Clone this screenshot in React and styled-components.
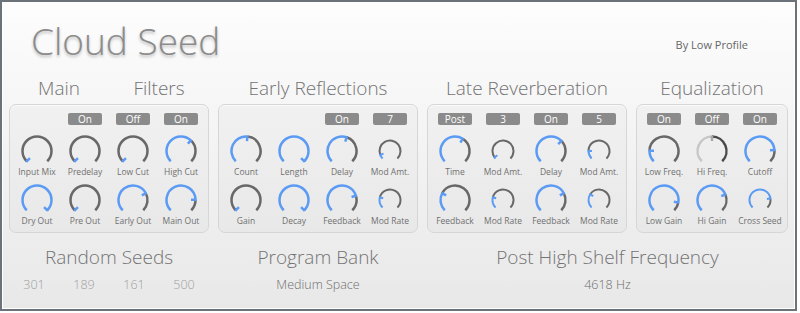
import React from "react";
import styled, { createGlobalStyle } from "styled-components";

const GlobalStyle = createGlobalStyle`
  html, body {
    margin: 0;
    padding: 0;
    background: #ffffff;
  }
  body {
    font-family: "Open Sans", "Liberation Sans", sans-serif;
  }
`;

// рамка окна плагина
const Frame = styled.div`
  width: 797px;
  height: 311px;
  box-sizing: border-box;
  border: 2px solid #6c7279;
  box-shadow: inset 0 0 0 1px #ffffff;
  background: linear-gradient(#fdfdfd, #e8e8e8);
  display: flex;
  flex-direction: column;
  padding-left: 7px;
  overflow: hidden;
`;

const Header = styled.div`
  display: flex;
  justify-content: space-between;
  align-items: flex-start;
  height: 74px;
  box-sizing: border-box;
  padding: 17px 47px 0 22px;
`;

const Title = styled.div`
  font-size: 37px;
  font-weight: 300;
  line-height: 44px;
  color: #8b8b8b;
  text-shadow: 0 2px 3px rgba(0, 0, 0, 0.25);
`;

const Byline = styled.div`
  margin-top: 19px;
  font-size: 11px;
  line-height: 14px;
  color: #666;
`;

const Sections = styled.div`
  display: flex;
  gap: 9px;
  align-items: flex-start;
`;

const Section = styled.div`
  display: flex;
  flex-direction: column;
`;

const HeadingRow = styled.div`
  display: flex;
  height: 24px;
  margin-bottom: 4px;
`;

const Heading = styled.div`
  flex: 1;
  text-align: center;
  font-size: 19px;
  font-weight: 300;
  line-height: 24px;
  color: #737373;
  white-space: nowrap;
`;

const Panel = styled.div`
  border: 1px solid #d6d6d6;
  border-radius: 7px;
  padding: 8px 3px 5px;
  background: rgba(0, 0, 0, 0.018);
  box-shadow: inset 0 1px 0 rgba(255, 255, 255, 0.7);
`;

const ButtonRow = styled.div`
  display: grid;
  grid-template-columns: repeat(${p => p.cols}, 48px);
  height: 12px;
  margin-bottom: 10px;
`;

const Toggle = styled.div`
  width: 34px;
  height: 12px;
  margin: 0 auto;
  border-radius: 2px;
  background: #8b8b8b;
  color: #fff;
  font-size: 10px;
  line-height: 12px;
  text-align: center;
`;

const KnobGrid = styled.div`
  display: grid;
  grid-template-columns: repeat(${p => p.cols}, 48px);
  row-gap: 6px;
`;

const Cell = styled.div`
  display: flex;
  flex-direction: column;
  align-items: center;
`;

const KnobSvg = styled.svg`
  display: block;
  width: 34px;
  height: 30px;
`;

const KnobLabel = styled.div`
  margin-top: 1px;
  font-size: 8.5px;
  line-height: 12px;
  color: #707070;
  white-space: nowrap;
`;

const Bottom = styled.div`
  display: flex;
  gap: 9px;
  margin-top: 11px;
`;

const Block = styled.div`
  width: ${p => p.w}px;
  display: flex;
  flex-direction: column;
  align-items: center;
`;

const BigLabel = styled.div`
  font-size: 19px;
  font-weight: 300;
  line-height: 26px;
  color: #737373;
  white-space: nowrap;
`;

const Seeds = styled.div`
  display: grid;
  grid-template-columns: repeat(4, 50px);
  margin-top: 7px;
`;

const Value = styled.div`
  margin-top: ${p => (p.inGrid ? 0 : 7)}px;
  text-align: center;
  font-size: 12.5px;
  font-weight: 300;
  line-height: 16px;
  color: ${p => (p.faint ? "#a0a0a0" : "#6e6e6e")};
`;

const BLUE = "#5b9bf4";
const GRAY = "#686868";

const polar = (cx, cy, r, deg) => {
  const a = (deg * Math.PI) / 180;
  return [cx + r * Math.sin(a), cy - r * Math.cos(a)];
};

const arc = (cx, cy, r, a0, a1) => {
  const [x0, y0] = polar(cx, cy, r, a0);
  const [x1, y1] = polar(cx, cy, r, a1);
  const large = a1 - a0 > 180 ? 1 : 0;
  return `M${x0} ${y0} A${r} ${r} 0 ${large} 1 ${x1} ${y1}`;
};

// крутилка: дуга 270°, синий кусок до значения и метка
const Knob = ({ value, small, off }) => {
  const cx = 17;
  const cy = 16;
  const r = small ? 10.5 : 14.5;
  const sw = small ? 2 : 2.5;
  const ang = -135 + value * 270;
  const fill = off ? "#c6c6c6" : BLUE;
  const rest = off ? "#4a4a4a" : GRAY;
  const tick = off ? "#a8a8a8" : BLUE;
  const [tx0, ty0] = polar(cx, cy, r - (small ? 3.5 : 4.5), ang);
  const [tx1, ty1] = polar(cx, cy, r + 0.8, ang);
  return (
    <KnobSvg viewBox="0 0 34 30">
      {value < 1 && (
        <path d={arc(cx, cy, r, ang, 135)} fill="none" stroke={rest} strokeWidth={sw} />
      )}
      {value > 0.005 && (
        <path d={arc(cx, cy, r, -135, ang)} fill="none" stroke={fill} strokeWidth={sw} />
      )}
      <line x1={tx0} y1={ty0} x2={tx1} y2={ty1} stroke={tick} strokeWidth={sw} strokeLinecap="butt" />
    </KnobSvg>
  );
};

const sections = [
  {
    headings: ["Main", "Filters"],
    buttons: [null, "On", "Off", "On"],
    rows: [
      [["Input Mix", 0], ["Predelay", 0], ["Low Cut", 0], ["High Cut", 0.66]],
      [["Dry Out", 1], ["Pre Out", 0], ["Early Out", 0.73], ["Main Out", 0.83]],
    ],
  },
  {
    headings: ["Early Reflections"],
    buttons: [null, null, "On", "7"],
    rows: [
      [["Count", 0.52], ["Length", 1], ["Delay", 0.57], ["Mod Amt.", 0.085, true]],
      [["Gain", 0], ["Decay", 1], ["Feedback", 0.77], ["Mod Rate", 0.22, true]],
    ],
  },
  {
    headings: ["Late Reverberation"],
    buttons: ["Post", "3", "On", "5"],
    rows: [
      [["Time", 0.62], ["Mod Amt.", 0.03, true], ["Delay", 0.67], ["Mod Amt.", 0.17, true]],
      [["Feedback", 0.27], ["Mod Rate", 0.22, true], ["Feedback", 0.73], ["Mod Rate", 0.29, true]],
    ],
  },
  {
    headings: ["Equalization"],
    buttons: ["On", "Off", "On"],
    rows: [
      [["Low Freq.", 0.17], ["Hi Freq.", 0.5, false, true], ["Cutoff", 0.82]],
      [["Low Gain", 0.87], ["Hi Gain", 0.75], ["Cross Seed", 0.8, true]],
    ],
  },
];

const App = () => (
  <>
    <GlobalStyle />
    <Frame>
      <Header>
        <Title>Cloud Seed</Title>
        <Byline>By Low Profile</Byline>
      </Header>
      <Sections>
        {sections.map((s, i) => (
          <Section key={i}>
            <HeadingRow>
              {s.headings.map(h => (
                <Heading key={h}>{h}</Heading>
              ))}
            </HeadingRow>
            <Panel>
              <ButtonRow cols={s.buttons.length}>
                {s.buttons.map((b, j) => (b ? <Toggle key={j}>{b}</Toggle> : <div key={j} />))}
              </ButtonRow>
              <KnobGrid cols={s.buttons.length}>
                {s.rows.flat().map(([label, v, small, off], j) => (
                  <Cell key={j}>
                    <Knob value={v} small={small} off={off} />
                    <KnobLabel>{label}</KnobLabel>
                  </Cell>
                ))}
              </KnobGrid>
            </Panel>
          </Section>
        ))}
      </Sections>
      <Bottom>
        <Block w={200}>
          <BigLabel>Random Seeds</BigLabel>
          <Seeds>
            {["301", "189", "161", "500"].map(n => (
              <Value key={n} inGrid faint>{n}</Value>
            ))}
          </Seeds>
        </Block>
        <Block w={200}>
          <BigLabel>Program Bank</BigLabel>
          <Value>Medium Space</Value>
        </Block>
        <Block w={361}>
          <BigLabel>Post High Shelf Frequency</BigLabel>
          <Value>4618 Hz</Value>
        </Block>
      </Bottom>
    </Frame>
  </>
);

export default App;
